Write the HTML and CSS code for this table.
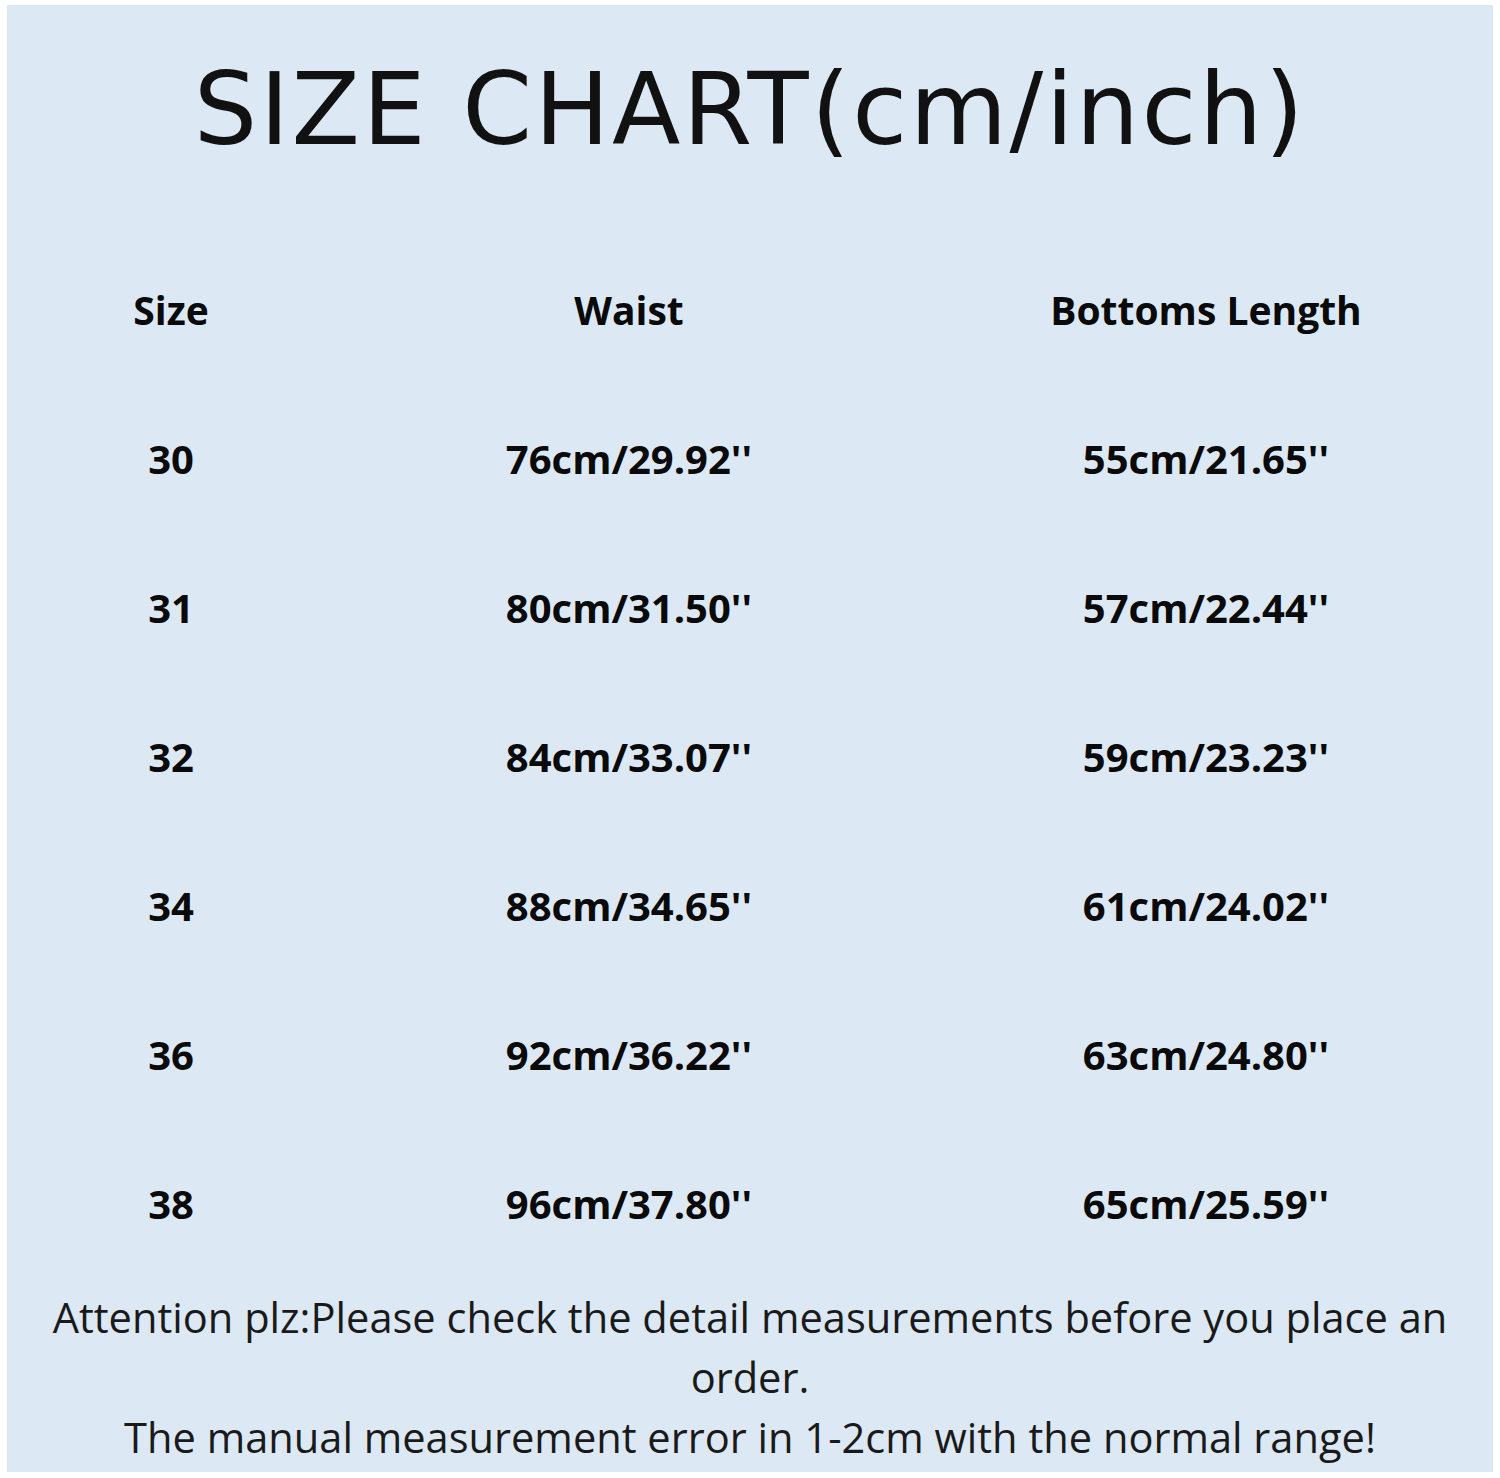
FILE: index.html
```html
<!DOCTYPE html>
<html lang="en">
<head>
<meta charset="utf-8">
<title>Size Chart</title>
<link rel="stylesheet" href="styles.css">
</head>
<body>
<div class="panel">
  <h1 class="title">SIZE CHART(cm/inch)</h1>
  <div class="chart">
    <div class="cell head">Size</div>
    <div class="cell head">Waist</div>
    <div class="cell head">Bottoms Length</div>

    <div class="cell val">30</div>
    <div class="cell val">76cm/29.92''</div>
    <div class="cell val">55cm/21.65''</div>

    <div class="cell val">31</div>
    <div class="cell val">80cm/31.50''</div>
    <div class="cell val">57cm/22.44''</div>

    <div class="cell val">32</div>
    <div class="cell val">84cm/33.07''</div>
    <div class="cell val">59cm/23.23''</div>

    <div class="cell val">34</div>
    <div class="cell val">88cm/34.65''</div>
    <div class="cell val">61cm/24.02''</div>

    <div class="cell val">36</div>
    <div class="cell val">92cm/36.22''</div>
    <div class="cell val">63cm/24.80''</div>

    <div class="cell val">38</div>
    <div class="cell val">96cm/37.80''</div>
    <div class="cell val">65cm/25.59''</div>
  </div>
  <p class="note">Attention plz:Please check the detail measurements before you place an<br>order.<br>The manual measurement error in 1-2cm with the normal range!</p>
</div>
</body>
</html>
```
FILE: styles.css
```css
html, body {
  margin: 0;
  padding: 0;
  background: #ffffff;
}

.panel {
  box-sizing: border-box;
  margin: 5px 7px 0 7px;
  width: 1486px;
  height: 1467px;
  background: #dce9f5;
  padding-top: 45px;
  color: #0d0d0d;
}

.title {
  margin: 0;
  font-family: "DejaVu Sans", sans-serif;
  font-weight: normal;
  font-size: 100px;
  line-height: 120px;
  letter-spacing: 2.4px;
  text-align: center;
  color: #111111;
}

.chart {
  margin-top: 65px;
  display: grid;
  grid-template-columns: 328px 588px 566px;
  grid-auto-rows: 149px;
}

.cell {
  display: flex;
  align-items: center;
  justify-content: center;
  font-family: "Open Sans", "Noto Sans", sans-serif;
  font-weight: bold;
  line-height: 1;
  color: #0a0a0a;
}

.head {
  font-size: 39px;
}

.val {
  font-size: 40px;
}

.note {
  margin: 9px 0 0 0;
  font-family: "Open Sans", "Noto Sans", sans-serif;
  font-size: 41.6px;
  line-height: 60px;
  text-align: center;
  color: #1a1a1a;
}
```
